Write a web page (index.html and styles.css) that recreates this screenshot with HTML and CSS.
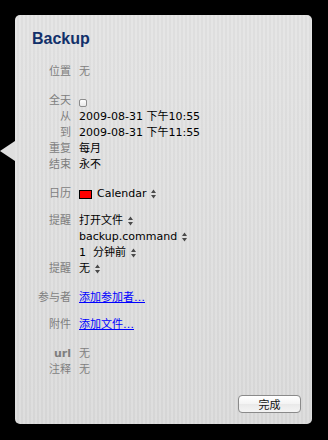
FILE: index.html
```html
<!DOCTYPE html>
<html lang="zh-CN">
<head>
    <meta charset="UTF-8">
    <title>Backup</title>
    <link rel="stylesheet" href="styles.css">
</head>
<body>
    <div class="popover">
        <h1 class="title">Backup</h1>

        <div class="fields">
            <div class="group">
                <div class="row"><span class="label">位置</span><span class="value muted">无</span></div>
            </div>

            <div class="group">
                <div class="row"><span class="label">全天</span><span class="value"><span class="checkbox"></span></span></div>
                <div class="row"><span class="label">从</span><span class="value">2009-08-31 下午10:55</span></div>
                <div class="row"><span class="label">到</span><span class="value">2009-08-31 下午11:55</span></div>
                <div class="row"><span class="label">重复</span><span class="value">每月</span></div>
                <div class="row"><span class="label">结束</span><span class="value">永不</span></div>
            </div>

            <div class="group">
                <div class="row">
                    <span class="label">日历</span>
                    <span class="value"><span class="swatch"></span>Calendar <svg class="stepper" width="5" height="10" viewBox="0 0 5 10"><path d="M2.5 0.5 L5 4 L0 4 Z M0 6 L5 6 L2.5 9.5 Z"/></svg></span>
                </div>
            </div>

            <div class="group tight">
                <div class="row">
                    <span class="label">提醒</span>
                    <span class="value">打开文件 <svg class="stepper" width="5" height="10" viewBox="0 0 5 10"><path d="M2.5 0.5 L5 4 L0 4 Z M0 6 L5 6 L2.5 9.5 Z"/></svg></span>
                </div>
                <div class="row">
                    <span class="label"></span>
                    <span class="value">backup.command <svg class="stepper" width="5" height="10" viewBox="0 0 5 10"><path d="M2.5 0.5 L5 4 L0 4 Z M0 6 L5 6 L2.5 9.5 Z"/></svg></span>
                </div>
                <div class="row">
                    <span class="label"></span>
                    <span class="value">1&nbsp; 分钟前 <svg class="stepper" width="5" height="10" viewBox="0 0 5 10"><path d="M2.5 0.5 L5 4 L0 4 Z M0 6 L5 6 L2.5 9.5 Z"/></svg></span>
                </div>
                <div class="row">
                    <span class="label">提醒</span>
                    <span class="value">无 <svg class="stepper" width="5" height="10" viewBox="0 0 5 10"><path d="M2.5 0.5 L5 4 L0 4 Z M0 6 L5 6 L2.5 9.5 Z"/></svg></span>
                </div>
            </div>

            <div class="group">
                <div class="row"><span class="label">参与者</span><span class="value"><a href="#">添加参加者…</a></span></div>
            </div>

            <div class="group tight">
                <div class="row"><span class="label">附件</span><span class="value"><a href="#">添加文件…</a></span></div>
            </div>

            <div class="group">
                <div class="row"><span class="label bold">url</span><span class="value muted">无</span></div>
                <div class="row"><span class="label">注释</span><span class="value muted">无</span></div>
            </div>
        </div>

        <div class="footer">
            <button class="button">完成</button>
        </div>
    </div>
</body>
</html>
```

FILE: styles.css
```css
body {
    margin: 0;
    background-color: #000;
    font-family: "DejaVu Sans", "Noto Sans CJK SC", sans-serif;
    font-size: 11px;
}
.popover {
    position: relative;
    box-sizing: border-box;
    width: 297px;
    height: 409px;
    margin: 15px 0 0 15px;
    padding: 14px 11px 11px 17px;
    border-radius: 5px;
    display: flex;
    flex-direction: column;
    background-color: #dedede;
    background-image:
        linear-gradient(to bottom, rgba(255,255,255,0.12), rgba(0,0,0,0.02)),
        repeating-linear-gradient(to right, #e2e2e2 0, #e2e2e2 2px, #dadada 2px, #dadada 4px);
}
.popover::before {
    content: "";
    position: absolute;
    left: -15px;
    top: 126px;
    border-right: 15px solid #dfdfdf;
    border-top: 10px solid transparent;
    border-bottom: 10px solid transparent;
}
.title {
    margin: 0;
    font-family: "Liberation Sans", sans-serif;
    font-size: 16px;
    font-weight: bold;
    line-height: 20px;
    color: #12306a;
}
.fields {
    margin-top: 15px;
}
.group + .group {
    margin-top: 13px;
}
.group.tight {
    margin-top: 11px;
}
.row {
    display: grid;
    grid-template-columns: 39px 1fr;
    column-gap: 8px;
    line-height: 16px;
    height: 16px;
}
.label {
    text-align: right;
    color: #7e7e7e;
}
.label.bold {
    font-weight: bold;
}
.value {
    color: #000;
    display: flex;
    align-items: center;
    white-space: pre;
}
.value.muted {
    color: #808080;
}
.value a {
    color: #0000ff;
    text-decoration: underline;
}
.checkbox {
    width: 8px;
    height: 8px;
    margin-top: 3px;
    box-sizing: border-box;
    border: 1px solid #8c8c8c;
    border-radius: 2px;
    background: linear-gradient(#fdfdfd, #e8e8e8);
}
.swatch {
    width: 13px;
    height: 9px;
    box-sizing: border-box;
    border: 1px solid #000;
    background-color: #f00;
    margin-right: 5px;
}
.stepper {
    fill: #4a4a4a;
    margin-left: 1px;
}
.footer {
    margin-top: auto;
    display: flex;
    justify-content: flex-end;
}
.button {
    width: 63px;
    height: 18px;
    padding: 0;
    border: 1px solid #8a8a8a;
    border-radius: 4px;
    background: linear-gradient(#ffffff, #f3f3f3 50%, #e9e9e9 51%, #f4f4f4);
    font-family: "DejaVu Sans", "Noto Sans CJK SC", sans-serif;
    font-size: 11px;
    color: #111;
}
```
